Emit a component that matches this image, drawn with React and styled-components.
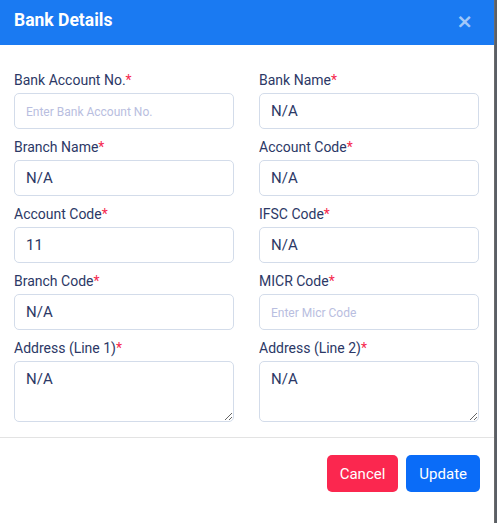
import React from "react";
import styled, { createGlobalStyle } from "styled-components";

const Global = createGlobalStyle`
  html, body { margin: 0; padding: 0; }
  body { background: #5a5f66; font-family: Roboto, "Noto Sans", sans-serif; overflow: hidden; }
  * { box-sizing: border-box; }
`;

const Modal = styled.div`
  width: 495px;
  background: #fff;
  border-right: 1px solid #6b6b6b;
  min-height: 523px;
`;

const Header = styled.div`
  height: 45px;
  background: #1a7af2;
  display: flex;
  align-items: center;
  justify-content: space-between;
  padding: 0 21px 0 14px;
`;

const Title = styled.h2`
  margin: 0;
  color: #fff;
  font-size: 17.5px;
  font-weight: 700;
  padding-bottom: 6px;
`;

const Close = styled.button`
  border: 0;
  background: none;
  padding: 0 0 4px;
  color: rgba(255, 255, 255, 0.6);
  font-size: 20px;
  font-weight: 700;
  line-height: 1;
  font-family: "DejaVu Sans", sans-serif;
  display: flex;
  align-items: center;
`;

const Body = styled.div`
  padding: 25px 15px 15px 14px;
  display: grid;
  grid-template-columns: 220px 220px;
  column-gap: 25px;
  row-gap: 8px;
  border-bottom: 1px solid #e3e3e3;
`;

const Field = styled.div`
  display: flex;
  flex-direction: column;
`;

const Label = styled.label`
  font-size: 14px;
  line-height: 20px;
  color: #2c3866;
  margin-bottom: 3px;
  span { color: #f5284e; }
`;

const Input = styled.input`
  height: 36px;
  width: 100%;
  border: 1px solid #d3dcea;
  border-radius: 5px;
  padding: 0 11px;
  font-family: Roboto, sans-serif;
  font-size: 15px;
  color: #2c3866;
  outline: none;
  &::placeholder { color: #b9bee0; font-size: 12px; }
`;

const Area = styled.textarea`
  height: 61px;
  width: 100%;
  border: 1px solid #d3dcea;
  border-radius: 5px;
  padding: 8px 11px;
  font-family: Roboto, sans-serif;
  font-size: 15px;
  color: #2c3866;
  outline: none;
  resize: both;
  display: block;
`;

const Footer = styled.div`
  display: flex;
  justify-content: flex-end;
  gap: 8px;
  padding: 17px 14px 17px;
`;

const Button = styled.button`
  height: 37px;
  padding: 0 13px;
  border: 0;
  border-radius: 5px;
  color: #fff;
  font-family: Roboto, sans-serif;
  font-size: 15px;
  background: ${(p) => (p.$variant === "danger" ? "#fb274f" : "#0a6cf8")};
`;

const fields = [
  { label: "Bank Account No.", placeholder: "Enter Bank Account No.", value: "" },
  { label: "Bank Name", value: "N/A" },
  { label: "Branch Name", value: "N/A" },
  { label: "Account Code", value: "N/A" },
  { label: "Account Code", value: "11" },
  { label: "IFSC Code", value: "N/A" },
  { label: "Branch Code", value: "N/A" },
  { label: "MICR Code", placeholder: "Enter Micr Code", value: "" },
  { label: "Address (Line 1)", value: "N/A", area: true },
  { label: "Address (Line 2)", value: "N/A", area: true },
];

export default function App() {
  return (
    <>
      <Global />
      <Modal>
        <Header>
          <Title>Bank Details</Title>
          <Close>×</Close>
        </Header>
        <Body>
          {fields.map((f, i) => (
            <Field key={i}>
              <Label>
                {f.label}
                <span>*</span>
              </Label>
              {f.area ? (
                <Area defaultValue={f.value} />
              ) : (
                <Input defaultValue={f.value} placeholder={f.placeholder} />
              )}
            </Field>
          ))}
        </Body>
        <Footer>
          <Button $variant="danger">Cancel</Button>
          <Button>Update</Button>
        </Footer>
      </Modal>
    </>
  );
}
